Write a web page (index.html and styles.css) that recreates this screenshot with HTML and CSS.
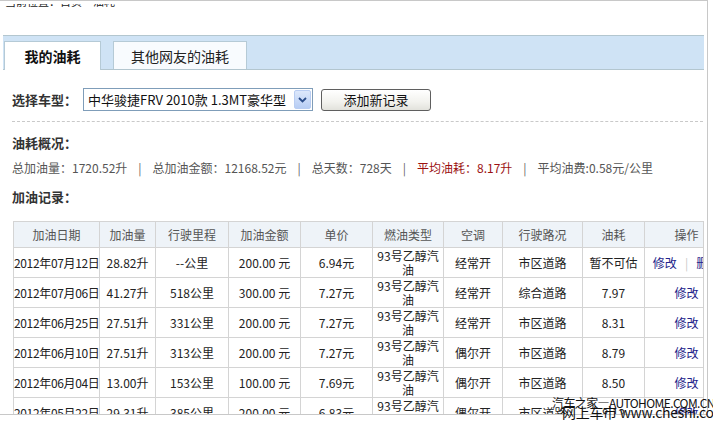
FILE: index.html
```html
<!DOCTYPE html>
<html lang="zh-CN">
<head>
<meta charset="utf-8">
<title>我的油耗</title>
<link rel="stylesheet" href="styles.css">
</head>
<body>
<div class="frame">
  <div class="crumb"><div class="crumb-clip"><span>当前位置：首页 &gt; 油耗</span></div></div>
  <div class="tabbar">
    <div class="tab active">我的油耗</div>
    <div class="tab">其他网友的油耗</div>
  </div>
  <div class="picker">
    <span class="label">选择车型：</span>
    <div class="select">
      <span class="select-text">中华骏捷FRV 2010款 1.3MT豪华型</span>
      <span class="select-arrow"><svg width="9" height="6" viewBox="0 0 9 6"><path d="M1 1 L4.5 4.5 L8 1" fill="none" stroke="#2b4d8a" stroke-width="1.8"/></svg></span>
    </div>
    <button class="btn">添加新记录</button>
  </div>
  <div class="dash"></div>
  <h3 class="title">油耗概况：</h3>
  <p class="summary">总加油量：1720.52升<span class="sep">|</span>总加油金额：12168.52元<span class="sep">|</span>总天数：728天<span class="sep">|</span><span class="red">平均油耗：8.17升</span><span class="sep">|</span>平均油费:0.58元/公里</p>
  <h3 class="title title-2">加油记录：</h3>
  <div class="table-wrap">
    <table class="records">
      <colgroup>
        <col class="c-date"><col class="c-vol"><col class="c-km"><col class="c-amt"><col class="c-price"><col class="c-fuel"><col class="c-ac"><col class="c-road"><col class="c-cons"><col class="c-op">
      </colgroup>
      <tr class="head">
        <th>加油日期</th><th>加油量</th><th>行驶里程</th><th>加油金额</th><th>单价</th><th>燃油类型</th><th>空调</th><th>行驶路况</th><th>油耗</th><th>操作</th>
      </tr>
      <tr>
        <td class="date">2012年07月12日</td><td>28.82升</td><td>--公里</td><td>200.00 元</td><td>6.94元</td><td>93号乙醇汽油</td><td>经常开</td><td>市区道路</td><td>暂不可估</td><td class="op"><a>修改</a><span class="op-sep">|</span><a>删除</a></td>
      </tr>
      <tr>
        <td class="date">2012年07月06日</td><td>41.27升</td><td>518公里</td><td>300.00 元</td><td>7.27元</td><td>93号乙醇汽油</td><td>经常开</td><td>综合道路</td><td>7.97</td><td class="op"><a>修改</a></td>
      </tr>
      <tr>
        <td class="date">2012年06月25日</td><td>27.51升</td><td>331公里</td><td>200.00 元</td><td>7.27元</td><td>93号乙醇汽油</td><td>经常开</td><td>市区道路</td><td>8.31</td><td class="op"><a>修改</a></td>
      </tr>
      <tr>
        <td class="date">2012年06月10日</td><td>27.51升</td><td>313公里</td><td>200.00 元</td><td>7.27元</td><td>93号乙醇汽油</td><td>偶尔开</td><td>市区道路</td><td>8.79</td><td class="op"><a>修改</a></td>
      </tr>
      <tr>
        <td class="date">2012年06月04日</td><td>13.00升</td><td>153公里</td><td>100.00 元</td><td>7.69元</td><td>93号乙醇汽油</td><td>偶尔开</td><td>市区道路</td><td>8.50</td><td class="op"><a>修改</a></td>
      </tr>
      <tr>
        <td class="date">2012年05月22日</td><td>29.31升</td><td>385公里</td><td>200.00 元</td><td>6.83元</td><td>93号乙醇汽油</td><td>偶尔开</td><td>市区道路</td><td>8.12</td><td class="op"><a>修改</a></td>
      </tr>
    </table>
  </div>
</div>
<div class="watermark">
  <span class="wm-1">汽车之家—AUTOHOME.COM.CN</span>
  <span class="wm-2">网上车市 www.cheshi.com</span>
</div>
</body>
</html>
```

FILE: styles.css
```css
html, body {
  margin: 0;
  padding: 0;
  background: #fff;
}
body {
  font-family: "Noto Sans CJK SC", "Liberation Sans", sans-serif;
  color: #333;
  position: relative;
  width: 713px;
  height: 424px;
  overflow: hidden;
}
.frame {
  width: 707px;
  height: 413px;
  border-top: 1px solid #c8c8c8;
  border-right: 1px solid #c8c8c8;
  border-bottom: 1px solid #c8c8c8;
  overflow: hidden;
  background: #fff;
}
.crumb {
  height: 31px;
  padding-top: 3px;
}
.crumb-clip {
  height: 4px;
  overflow: hidden;
  padding-left: 5px;
}
.crumb-clip span {
  display: block;
  margin-top: -9px;
  font-size: 11px;
  line-height: 13px;
  color: #222;
}
.tabbar {
  margin: 0 3px;
  height: 33px;
  border-top: 1px solid #b3c6cf;
  border-bottom: 1px solid #b3c6cf;
  background: #cfe3f5;
  display: flex;
  align-items: flex-end;
  gap: 12px;
  padding-left: 1px;
}
.tab {
  height: 27px;
  border: 1px solid #b5cad6;
  border-bottom: none;
  background: #f8fbfe;
  display: flex;
  align-items: center;
  justify-content: center;
  font-size: 14px;
  color: #222;
  box-sizing: content-box;
  width: 132px;
}
.tab.active {
  width: 95px;
  height: 28px;
  margin-bottom: -1px;
  background: #fff;
  font-weight: bold;
  color: #111;
}
.picker {
  margin-top: 18px;
  padding-left: 12px;
  height: 23px;
  display: flex;
  align-items: center;
}
.label {
  width: 71px;
  font-size: 13px;
  font-weight: bold;
  color: #333;
}
.select {
  width: 227px;
  height: 21px;
  border: 1px solid #7f9db9;
  background: #fff;
  display: flex;
  align-items: center;
  justify-content: space-between;
  padding: 0 1px 0 0;
}
.select-text {
  font-size: 13px;
  color: #111;
  padding-left: 4px;
  white-space: nowrap;
}
.select-arrow {
  width: 15px;
  height: 17px;
  border: 1px solid #b9cdf2;
  border-radius: 2px;
  background: linear-gradient(#dde8fb, #b7cdf4);
  display: flex;
  align-items: center;
  justify-content: center;
}
.btn {
  margin-left: 8px;
  width: 110px;
  height: 22px;
  border: 1px solid #5f5f5f;
  border-radius: 3px;
  background: linear-gradient(#ffffff, #f2f2ee 60%, #e2e2dc);
  font-family: "Noto Sans CJK SC", sans-serif;
  font-size: 13px;
  color: #111;
  padding: 0;
  line-height: 20px;
}
.dash {
  margin: 10px 4px 0 12px;
  border-top: 1px dashed #c9c9c9;
}
.title {
  margin: 11px 0 0 12px;
  font-size: 13px;
  line-height: 20px;
  font-weight: bold;
  color: #333;
}
.title-2 {
  margin-top: 9px;
}
.summary {
  margin: 5px 0 0 12px;
  font-size: 12px;
  line-height: 20px;
  color: #555;
  white-space: nowrap;
}
.sep {
  margin: 0 11px;
  color: #666;
}
.red {
  color: #9b1111;
}
.table-wrap {
  margin: 14px 0 0 13px;
  width: 690px;
  overflow: hidden;
  border-right: 1px solid #d2d2d2;
}
.records {
  table-layout: fixed;
  width: 715px;
  border-collapse: collapse;
  font-size: 12px;
}
.c-date { width: 86px; }
.c-vol { width: 56px; }
.c-km { width: 73px; }
.c-amt { width: 72px; }
.c-price { width: 72px; }
.c-fuel { width: 71px; }
.c-ac { width: 59px; }
.c-road { width: 80px; }
.c-cons { width: 62px; }
.c-op { width: 84px; }
.records th,
.records td {
  border: 1px solid #d4d4d4;
  text-align: center;
  padding: 0 2px;
  line-height: 14px;
}
.records th {
  background: #eef3f8;
  font-weight: normal;
  color: #555;
}
.records td {
  color: #222;
}
.records tr {
  height: 30px;
}
.records tr.head {
  height: 26px;
}
.records td.date {
  white-space: nowrap;
  padding: 0;
  letter-spacing: -0.35px;
}
.records td.op {
  white-space: nowrap;
}
.op a {
  color: #23238a;
}
.op-sep {
  color: #c8c8c8;
  margin: 0 8px;
}
.watermark {
  position: absolute;
  left: 548px;
  top: 396px;
  width: 165px;
  height: 28px;
}
.wm-1 {
  position: absolute;
  left: 4px;
  top: 0;
  font-size: 12px;
  line-height: 14px;
  color: #111;
  letter-spacing: -0.6px;
  white-space: nowrap;
}
.wm-2 {
  position: absolute;
  left: 14px;
  top: 8px;
  font-size: 14px;
  line-height: 16px;
  color: #111;
  white-space: nowrap;
  letter-spacing: -0.3px;
}
```
